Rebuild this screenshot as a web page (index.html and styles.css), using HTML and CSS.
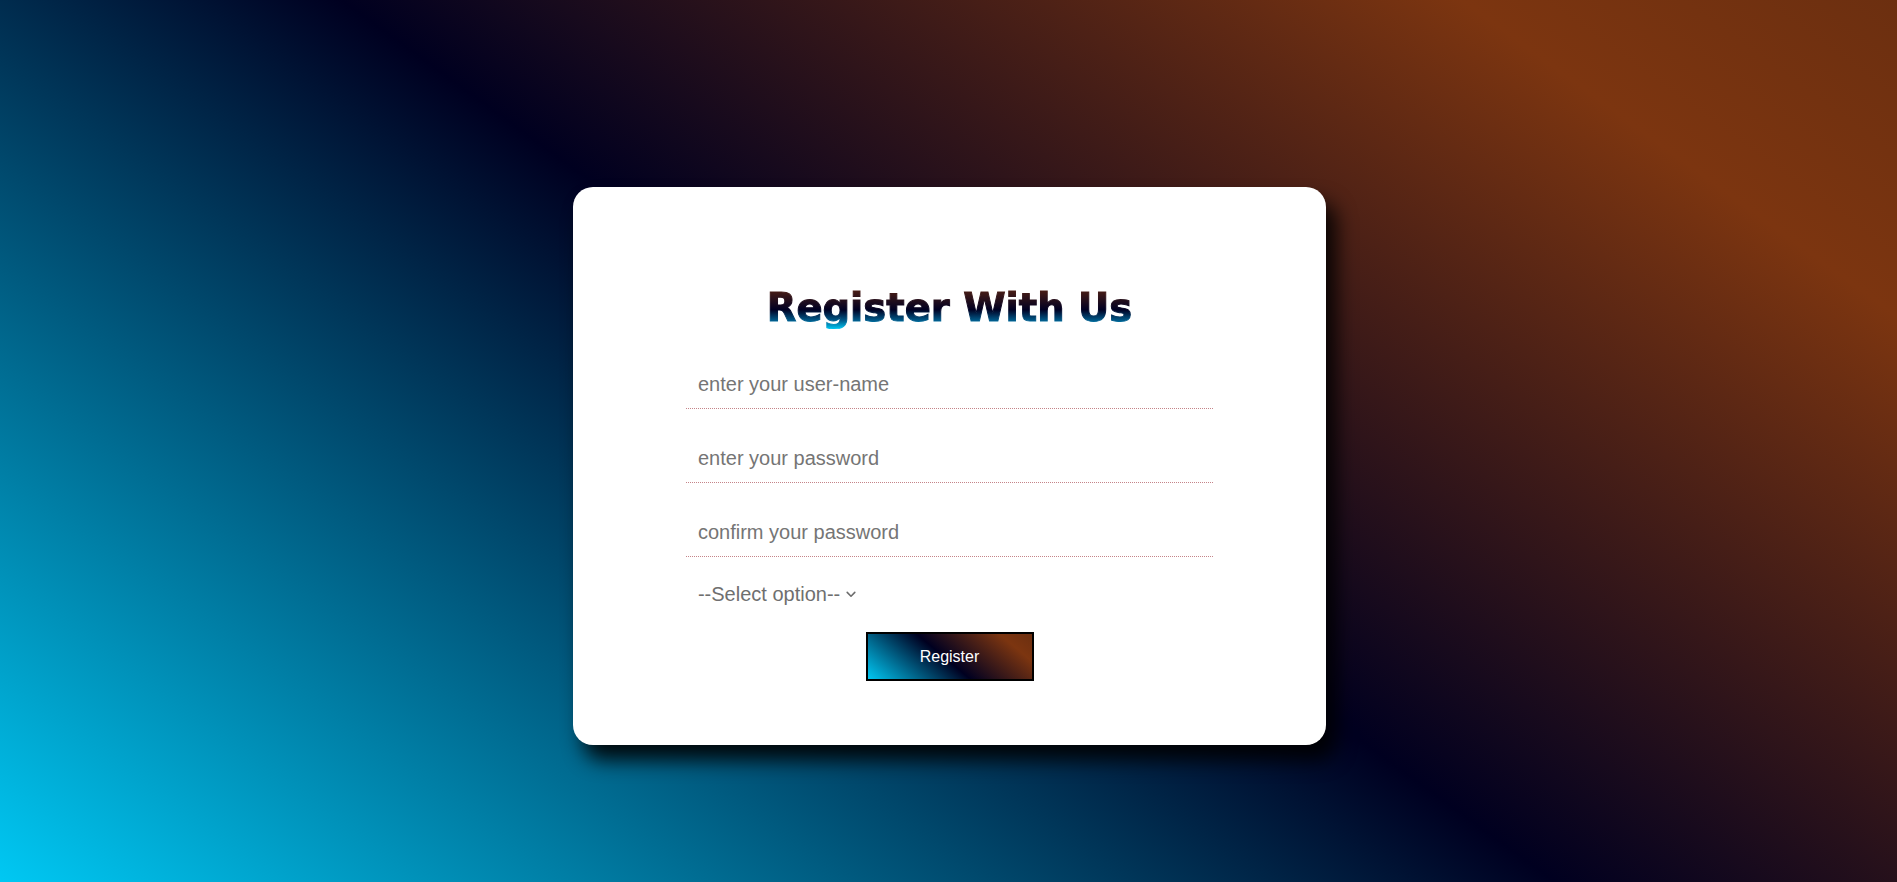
FILE: index.html
```html
<!DOCTYPE html>
<html lang="en">
<head>
<meta charset="utf-8">
<title>Register With Us</title>
<link rel="stylesheet" href="styles.css">
</head>
<body>
<main class="page">
  <form class="card" onsubmit="return false">
    <h1 class="title"><span class="title-text">Register With Us</span></h1>
    <div class="fields">
      <input class="field" type="text" placeholder="enter your user-name">
      <input class="field" type="password" placeholder="enter your password">
      <input class="field" type="password" placeholder="confirm your password">
      <div class="select-row">
        <select class="select">
          <option>--Select option--</option>
          <option>Student</option>
          <option>Teacher</option>
        </select>
        <svg class="chevron" width="10" height="7" viewBox="0 0 10 7" aria-hidden="true">
          <path d="M1.2 1.4 L5 5.2 L8.8 1.4" fill="none" stroke="#6d6d6d" stroke-width="1.6" stroke-linecap="round" stroke-linejoin="round"/>
        </svg>
      </div>
    </div>
    <button class="btn" type="submit">Register</button>
  </form>
</main>
</body>
</html>
```

FILE: styles.css
```css
html, body {
  margin: 0;
  padding: 0;
  height: 100%;
}

body {
  font-family: "Liberation Sans", Arial, sans-serif;
  background: linear-gradient(36deg, #00c8f3 0%, #000020 50%, #7c3510 86%, #6c2f10 100%);
  overflow: hidden;
}

.page {
  box-sizing: border-box;
  height: 100vh;
  display: flex;
  justify-content: center;
  align-items: flex-start;
  padding: 187px 0 0 2px;
}

.card {
  box-sizing: border-box;
  width: 753px;
  height: 558px;
  background: #ffffff;
  border-radius: 20px;
  box-shadow: 10px 15px 20px rgba(0, 0, 0, 0.9);
  padding: 99px 0 64px;
  display: flex;
  flex-direction: column;
  align-items: center;
}

.title {
  margin: 0;
  height: 43px;
  line-height: 43px;
  text-align: center;
}

.title-text {
  display: inline-block;
  font-family: "DejaVu Sans", sans-serif;
  font-weight: 700;
  font-size: 38.5px;
  letter-spacing: 0;
  line-height: 43px;
  -webkit-text-stroke: 1px transparent;
  background: linear-gradient(to top, #00c8f3 0%, #005a8a 20%, #000022 45%, #5a2412 100%);
  -webkit-background-clip: text;
  background-clip: text;
  color: transparent;
}

.fields {
  width: 70%;
  margin-top: 32px;
  display: flex;
  flex-direction: column;
}

.field {
  box-sizing: border-box;
  height: 48px;
  margin: 0 0 26px;
  padding: 0 12px;
  border: none;
  border-bottom: 1px dotted #c58489;
  outline: none;
  font-family: "Liberation Sans", Arial, sans-serif;
  font-size: 20px;
  color: #333;
  background: transparent;
}

.field:last-of-type {
  margin-bottom: 0;
}

.field::placeholder {
  color: #757575;
}

.select-row {
  margin-top: 25px;
  height: 23px;
  padding-left: 12px;
  display: flex;
  align-items: center;
  gap: 5px;
}

.select {
  appearance: none;
  -webkit-appearance: none;
  border: none;
  outline: none;
  background: transparent;
  padding: 0;
  margin: 0;
  height: 23px;
  font-family: "Liberation Sans", Arial, sans-serif;
  font-size: 20px;
  color: #6f6f6f;
}

.chevron {
  display: block;
  margin-top: 1px;
}

.btn {
  box-sizing: border-box;
  margin-top: 27px;
  width: 168px;
  height: 49px;
  border: 2px solid #000;
  background: linear-gradient(40deg, #00c8f3 0%, #000020 47%, #7c3510 85%, #6c2f10 100%);
  color: #fff;
  font-family: "Liberation Sans", Arial, sans-serif;
  font-size: 16px;
  cursor: pointer;
}
```
